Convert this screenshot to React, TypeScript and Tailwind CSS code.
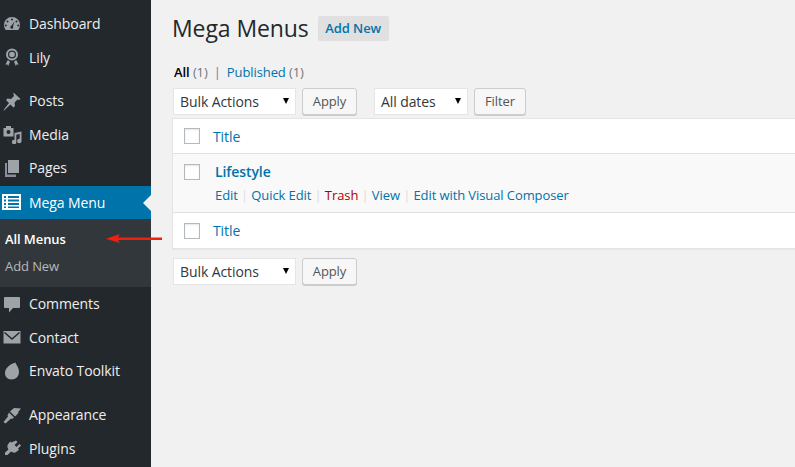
import React from 'react';

const ICON_COLOR = '#9ea3a8';
const BAR_BG = '#23282d';

const icons: Record<string, React.ReactNode> = {
  dashboard: (
    <path fillRule="evenodd" d="M10 3a8 8 0 0 0-8 8c0 2 .7 3.700 1.800 5h12.400A8 8 0 0 0 18 11a8 8 0 0 0-8-8zM10 4.500a1 1 0 1 1 0 2 1 1 0 0 1 0-2zM5.500 6.500a1 1 0 1 1 0 2 1 1 0 0 1 0-2zM14.500 6.500a1 1 0 1 1 0 2 1 1 0 0 1 0-2zM3.800 10.500a1 1 0 1 1 0 2 1 1 0 0 1 0-2zM16.200 10.500a1 1 0 1 1 0 2 1 1 0 0 1 0-2zM12.500 7.500 11 12.300a1.500 1.500 0 1 1-1.600-.5z" />
  ),
  award: (
    <g>
      <path fillRule="evenodd" d="M10 1.500a6 6 0 1 1 0 12 6 6 0 0 1 0-12zM10 3.500a4 4 0 1 0 0 8 4 4 0 0 0 0-8z" />
      <circle cx="10" cy="7.500" r="2.800" />
      <path d="M5.800 13 8 14.800 6.200 19 5.200 17.200 3.300 17.800zM14.200 13 12 14.800l1.800 4.200 1-1.800 1.900.6z" />
    </g>
  ),
  pin: (
    <path d="M11.500 1.500l7 6.500-1.500 1-1.500-.5-3 3 .5 3.500-1.500 1.500-3-3-6.500 6-.5-.5 5.500-7-3-3 1.500-1.500 3.500.5 3-3-.5-1.500z" />
  ),
  media: (
    <path fillRule="evenodd" d="M1.500 4H4V2h5v2h2.500v8.500h-10zM6.500 6a2 2 0 1 0 0 4 2 2 0 0 0 0-4zM12.500 9l7-1.500V17a2.200 2.200 0 1 1-1.800-2.100v-5l-3.400.8v7.300a2.200 2.200 0 1 1-1.800-2.100z" />
  ),
  pages: (
    <g>
      <path d="M6 2h11v13H6z" />
      <path d="M3 5h2v11.500h9V19H3z" fill="#8f8a9e" />
    </g>
  ),
  comments: <path d="M3 3h14a1 1 0 0 1 1 1v9a1 1 0 0 1-1 1h-6l-4 4.500V14H3a1 1 0 0 1-1-1V4a1 1 0 0 1 1-1z" />,
  mail: (
    <g>
      <path d="M1.500 4h17v12.500h-17z" />
      <path d="M2.500 5.500 10 12l7.500-6.500" fill="none" stroke={BAR_BG} strokeWidth="1.500" />
    </g>
  ),
  drop: <path d="M13.500 1.500C14 4 17 6 17 11c0 4.500-3.200 7.500-7.500 7.500S3 15.500 3 12c0-5 5-9 10.500-10.500z" />,
  brush: (
    <path d="M19 3.500 12 3 8 6.500l5 5 3-3 .5-2zM7 7.500l5 5-2 1.500-1-.5L3.500 18.500 1.500 17 6 11.500l-.5-1z" />
  ),
  plug: (
    <path d="M14 2.500l1.500 1.500-3 3 2 2 3-3L19 7.500l-3 3 1 1-1.500 1.500a5 5 0 0 1-6.500.5L5.500 17H3v-2.500l3.500-3a5 5 0 0 1 .5-6.500L8.500 3.500l1 1z" />
  ),
};

const MenuIcon = ({ name }: { name: string }) => (
  <svg viewBox="0 0 20 20" className="w-5 h-5 shrink-0" fill={ICON_COLOR}>
    {icons[name]}
  </svg>
);

const MenuItem = ({ icon, label }: { icon: string; label: string }) => (
  <div className="flex items-center h-[33.5px] pl-[2px] text-[14px] text-[#eeeeee]">
    <MenuIcon name={icon} />
    <span className="ml-[7px]">{label}</span>
  </div>
);

const Sidebar = () => (
  <div className="w-[151px] shrink-0 bg-[#23282d] pt-[7px]">
    <MenuItem icon="dashboard" label="Dashboard" />
    <MenuItem icon="award" label="Lily" />
    <div className="h-[10px]" />
    <MenuItem icon="pin" label="Posts" />
    <MenuItem icon="media" label="Media" />
    <MenuItem icon="pages" label="Pages" />
    <div className="h-[1px]" />
    <div className="relative flex items-center h-[33px] pl-[2px] bg-[#0073aa] text-[14px] text-white">
      <svg viewBox="0 0 20 20" className="w-5 h-5 shrink-0" fill="#ffffff">
        <path fillRule="evenodd" d="M0 2h19v16H0zM2 4v2h2V4zM6 4v2h11V4zM2 7.500v2h2v-2zM6 7.500v2h11v-2zM2 11v2h2v-2zM6 11v2h11v-2zM2 14.500v1.500h2v-1.500zM6 14.500v1.500h11v-1.500z" />
      </svg>
      <span className="ml-[7px]">Mega Menu</span>
      <div className="absolute right-0 top-[9px] w-0 h-0 border-y-[8px] border-y-transparent border-r-[8px] border-r-[#f1f1f1]" />
    </div>
    <div className="bg-[#32373c] h-[68.5px] pt-[7px] pl-[5px] text-[13px]">
      <div className="h-[27px] leading-[27px] font-semibold text-white">All Menus</div>
      <div className="h-[26px] leading-[26px] text-[#b4b9be]">Add New</div>
    </div>
    <MenuItem icon="comments" label="Comments" />
    <MenuItem icon="mail" label="Contact" />
    <MenuItem icon="drop" label="Envato Toolkit" />
    <div className="h-[10.5px]" />
    <MenuItem icon="brush" label="Appearance" />
    <MenuItem icon="plug" label="Plugins" />
  </div>
);

const SelectBox = ({ label, width }: { label: string; width: string }) => (
  <div className={`${width} relative h-[27px] bg-white border border-[#e5e5e5] pl-[6px] leading-[25px] text-[14px] text-[#32373c]`}>
    {label}
    <span className="absolute right-[6px] top-[9px] w-0 h-0 border-x-[3.5px] border-x-transparent border-t-[6px] border-t-black" />
  </div>
);

const Btn = ({ label, width }: { label: string; width: string }) => (
  <div className={`${width} h-[27px] flex items-center justify-center bg-[#f7f7f7] border border-[#cccccc] rounded-[3px] shadow-[0_1px_0_#cccccc] text-[13px] text-[#555555]`}>
    {label}
  </div>
);

const Check = () => (
  <span className="block w-4 h-4 bg-white border border-[#b4b9be] shadow-[inset_0_1px_2px_rgba(0,0,0,0.1)]" />
);

const Sep = () => <span className="text-[#dddddd] mx-[3.25px]">|</span>;

const Main = () => (
  <div className="flex-1 min-w-0 pl-[21px] pt-[16px]">
    <div className="flex items-center h-[25px]">
      <h1 className="text-[23px] leading-[25px] text-[#23282d]">Mega Menus</h1>
      <span className="ml-[9px] w-[71px] h-[25px] flex items-center justify-center bg-[#e0e0e0] rounded-[2px] text-[13px] font-semibold text-[#0073aa]">
        Add New
      </span>
    </div>
    <div className="mt-[22px] pl-[2px] h-[18px] leading-[18px] text-[13px]">
      <span className="font-semibold text-black">All</span> <span className="text-[#72777c]">(1)</span>
      <span className="text-[#7777aa] mx-[6px]">|</span>
      <span className="text-[#0073aa]">Published</span> <span className="text-[#72777c]">(1)</span>
    </div>
    <div className="mt-[7px] ml-[1px] flex items-start">
      <SelectBox label="Bulk Actions" width="w-[123px]" />
      <div className="ml-[6px]"><Btn label="Apply" width="w-[55px]" /></div>
      <div className="ml-[17px]"><SelectBox label="All dates" width="w-[94px]" /></div>
      <div className="ml-[6px]"><Btn label="Filter" width="w-[52px]" /></div>
    </div>
    <div className="mt-[3px] border border-[#e5e5e5] border-r-0 bg-white shadow-[0_1px_1px_rgba(0,0,0,0.04)]">
      <div className="flex items-center h-[35px] border-b border-[#e1e1e1] pl-[11px] text-[14px] text-[#0073aa]">
        <Check />
        <span className="ml-[13px]">Title</span>
      </div>
      <div className="h-[59px] bg-[#f9f9f9] border-b border-[#e1e1e1] flex pl-[11px] pt-[10px]">
        <Check />
        <div className="ml-[15px]">
          <div className="text-[14px] leading-[16px] font-semibold text-[#0073aa]">Lifestyle</div>
          <div className="mt-[6px] text-[13px] leading-[18px] text-[#0073aa]">
            Edit<Sep />Quick Edit<Sep /><span className="text-[#a00]">Trash</span><Sep />View<Sep />Edit with Visual Composer
          </div>
        </div>
      </div>
      <div className="flex items-center h-[35px] pl-[11px] text-[14px] text-[#0073aa]">
        <Check />
        <span className="ml-[13px]">Title</span>
      </div>
    </div>
    <div className="mt-[9px] ml-[1px] flex items-start">
      <SelectBox label="Bulk Actions" width="w-[123px]" />
      <div className="ml-[6px]"><Btn label="Apply" width="w-[55px]" /></div>
    </div>
  </div>
);

export default function App() {
  return (
    <div className="relative flex h-[467px] w-[795px] overflow-hidden bg-[#f1f1f1] tracking-[-0.09px] font-['Open_Sans',sans-serif]">
      <Sidebar />
      <Main />
      {/* annotation arrow */}
      <svg className="absolute left-[105px] top-[232px] w-[60px] h-[14px]" viewBox="0 0 60 14">
        <path d="M1 6.700 15 2 13 5.500H57V8H13L15 11z" fill="#f0200c" />
      </svg>
    </div>
  );
}
